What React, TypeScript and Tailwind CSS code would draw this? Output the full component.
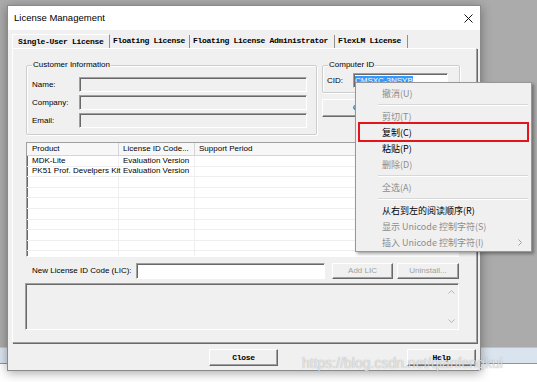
import React from "react";

const raised =
  "border border-t-white border-l-white border-b-[#696969] border-r-[#696969] shadow-[inset_-1px_-1px_0_#a0a0a0] bg-[#f0f0f0]";
const sunken =
  "border border-t-[#a0a0a0] border-l-[#a0a0a0] border-b-white border-r-white shadow-[inset_1px_1px_0_#696969]";

function GroupBox({
  label,
  className,
  children,
}: {
  label: string;
  className: string;
  children?: React.ReactNode;
}) {
  return (
    <div
      className={`relative border border-[#cdcdcd] rounded-[2px] shadow-[inset_1px_1px_0_#ffffff,1px_1px_0_#ffffff] ${className}`}
    >
      <span className="absolute -top-[6px] left-[5px] bg-[#f0f0f0] px-[1px] leading-[10px]">
        {label}
      </span>
      {children}
    </div>
  );
}

function MenuItem({ text, enabled, sub }: { text: string; enabled?: boolean; sub?: boolean }) {
  return (
    <div
      className={`h-[16px] flex items-center justify-between pl-[26px] pr-[9px] leading-none ${
        enabled ? "text-black" : "text-[#8d8d8d]"
      }`}
    >
      <span>{text}</span>
      {sub && (
        <svg width="4" height="7" viewBox="0 0 4 7">
          <path d="M0.5 0.5 L3.5 3.5 L0.5 6.5" fill="none" stroke="#a0a0a0" strokeWidth="1" />
        </svg>
      )}
    </div>
  );
}

function MenuSep() {
  return (
    <div className="h-[7px] flex flex-col justify-center ml-[22px] mr-[3px]">
      <div className="h-px bg-[#d7d7d7]" />
      <div className="h-px bg-white" />
    </div>
  );
}

export default function App() {
  const rows = [
    ["MDK-Lite", "Evaluation Version"],
    ["PK51 Prof. Develpers Kit", "Evaluation Version"],
    ["", ""],
    ["", ""],
    ["", ""],
    ["", ""],
    ["", ""],
    ["", ""],
    ["", ""],
    ["", ""],
  ];
  const tab = "font-['Liberation_Mono',monospace] font-bold text-[8px] tracking-[-0.3px] leading-none";
  return (
    <div className="relative w-[537px] h-[382px] overflow-hidden font-['Liberation_Sans',Arial,sans-serif] text-[8px] text-black">
      {/* desktop background */}
      <div className="flex flex-col h-full">
        <div className="h-[347px] bg-[#ababab]" />
        <div className="h-[17px] bg-[#dae4ef] border-t border-t-[#b9c4d1] border-b border-b-[#8c96a3]" />
        <div className="flex-1 bg-white" />
      </div>

      {/* window */}
      <div className="absolute left-[7px] top-[5px] w-[474px] h-[366px] bg-[#f0f0f0] border border-[#8a8a8a] shadow-[0_2px_10px_rgba(0,0,0,0.35)] flex flex-col">
        {/* title bar */}
        <div className="h-[24px] shrink-0 bg-white flex items-center justify-between pl-[6px] pr-[7px]">
          <span className="text-[9.5px] leading-none">License Management</span>
          <svg width="9" height="9" viewBox="0 0 9 9">
            <path d="M0.5 0.5 L8.5 8.5 M8.5 0.5 L0.5 8.5" stroke="#111" strokeWidth="1" />
          </svg>
        </div>

        <div className="flex-1 flex flex-col px-[4px]">
          {/* tabs */}
          <div className="h-[18px] shrink-0 flex items-end">
            <div className={`w-[98px] h-[14px] pl-[5px] pt-[3px] border-t border-l border-t-white border-l-white border-r border-r-[#8f8f8f] ${tab}`}>
              Single-User License
            </div>
            <div className={`w-[80px] h-[13px] pl-[3px] pt-[2px] border-r border-r-[#8f8f8f] ${tab}`}>
              Floating License
            </div>
            <div className={`w-[145px] h-[13px] pl-[3px] pt-[2px] border-r border-r-[#8f8f8f] ${tab}`}>
              Floating License Administrator
            </div>
            <div className={`w-[73px] h-[13px] pl-[3px] pt-[2px] border-r border-r-[#8f8f8f] ${tab}`}>
              FlexLM License
            </div>
          </div>

          {/* panel */}
          <div className="h-[295px] w-[465px] shrink-0 border border-t-white border-l-white border-b-[#a0a0a0] border-r-[#a0a0a0] shadow-[1px_1px_0_#696969] pt-[16px] pl-[13px] flex flex-col">
            <div className="flex">
              <GroupBox label="Customer Information" className="w-[291px] h-[70px] pt-[11px] pl-[5px] flex flex-col gap-[3px]">
                {["Name:", "Company:", "Email:"].map((l) => (
                  <div key={l} className="flex items-center h-[15px]">
                    <span className="w-[47px]">{l}</span>
                    <div className={`w-[228px] h-[15px] bg-[#f0f0f0] ${sunken}`} />
                  </div>
                ))}
              </GroupBox>
              <div className="ml-[5px] w-[138px] flex flex-col">
                <GroupBox label="Computer ID" className="w-[138px] h-[28px] pt-[7px] pl-[4px]">
                  <div className="flex items-center h-[15px]">
                    <span className="w-[26px]">CID:</span>
                    <div className={`w-[95px] h-[15px] bg-white pl-[1px] flex items-center ${sunken}`}>
                      <span className="bg-[#3399ff] text-white leading-[9px] px-0">CMSXC-3NSYB</span>
                    </div>
                  </div>
                </GroupBox>
                <div className={`mt-[6px] h-[18px] w-[138px] flex items-center justify-center ${raised}`}>
                  Get LIC via Internet...
                </div>
              </div>
            </div>

            {/* list view */}
            <div className={`mt-[7px] w-[433px] h-[115px] bg-white overflow-hidden flex flex-col ${sunken}`}>
              <div className="h-[13px] shrink-0 flex bg-[#f7f7f7] border-b border-b-[#d5d5d5]">
                <div className="w-[92px] pl-[5px] flex items-center border-r border-r-[#d5d5d5]">Product</div>
                <div className="w-[76px] pl-[4px] flex items-center border-r border-r-[#d5d5d5]">License ID Code...</div>
                <div className="flex-1 pl-[4px] flex items-center">Support Period</div>
              </div>
              {rows.map((r, i) => (
                <div key={i} className="h-[10.6px] shrink-0 flex border-b border-b-[#efefef] leading-none">
                  <div className="w-[92px] pl-[5px] flex items-center border-r border-r-[#efefef] whitespace-nowrap">{r[0]}</div>
                  <div className="w-[76px] pl-[4px] flex items-center border-r border-r-[#efefef] whitespace-nowrap">{r[1]}</div>
                  <div className="flex-1" />
                </div>
              ))}
            </div>

            {/* LIC row */}
            <div className="mt-[6px] h-[16px] flex items-center">
              <span className="w-[110px] pl-[6px]">New License ID Code (LIC):</span>
              <div className={`w-[189px] h-[16px] bg-white ${sunken}`} />
              <div className={`ml-[7px] w-[61px] h-[16px] flex items-center justify-center text-[#a0a0a0] ${raised}`}>
                Add LIC
              </div>
              <div className={`ml-[4px] w-[62px] h-[16px] flex items-center justify-center text-[#a0a0a0] ${raised}`}>
                Uninstall...
              </div>
            </div>

            {/* message box */}
            <div className={`mt-[4px] -ml-[1px] w-[434px] h-[47px] bg-[#f0f0f0] flex justify-end pr-[3px] ${sunken}`}>
              <div className="flex flex-col justify-between py-[6px]">
                <svg width="7" height="4" viewBox="0 0 7 4">
                  <path d="M0.5 3.5 L3.5 0.5 L6.5 3.5" fill="none" stroke="#b4b4b4" strokeWidth="1" />
                </svg>
                <svg width="7" height="4" viewBox="0 0 7 4">
                  <path d="M0.5 0.5 L3.5 3.5 L6.5 0.5" fill="none" stroke="#b4b4b4" strokeWidth="1" />
                </svg>
              </div>
            </div>
          </div>

          {/* bottom buttons */}
          <div className="mt-[6px] h-[17px] flex">
            <div className={`ml-[197px] w-[69px] h-[17px] flex items-center justify-center ${raised} ${tab}`}>
              Close
            </div>
            <div className={`ml-[129px] w-[69px] h-[17px] flex items-center justify-center ${raised} ${tab}`}>
              Help
            </div>
          </div>
        </div>
      </div>

      {/* context menu */}
      <div className="absolute left-[355px] top-[82px] w-[177px] h-[170px] bg-[#f0f0f0] border border-[#979797] shadow-[2px_2px_3px_rgba(0,0,0,0.35)] py-[2px] font-['Noto_Sans_CJK_SC',sans-serif] text-[9px]">
        <MenuItem text="撤消(U)" />
        <MenuSep />
        <MenuItem text="剪切(T)" />
        <MenuItem text="复制(C)" enabled />
        <MenuItem text="粘贴(P)" enabled />
        <MenuItem text="删除(D)" />
        <MenuSep />
        <MenuItem text="全选(A)" />
        <MenuSep />
        <MenuItem text="从右到左的阅读顺序(R)" enabled />
        <MenuItem text="显示 Unicode 控制字符(S)" />
        <MenuItem text="插入 Unicode 控制字符(I)" sub />
        <div className="absolute left-[2px] top-[39px] w-[171px] h-[20px] border-2 border-[#e5141b]" />
      </div>

      {/* watermark */}
      <div className="absolute left-[302px] top-[356px] text-[14px] leading-none text-white/70 [text-shadow:0_0_1px_rgba(90,90,90,0.6)]">
        https://blog.csdn.net/qianfengkui
      </div>
    </div>
  );
}
